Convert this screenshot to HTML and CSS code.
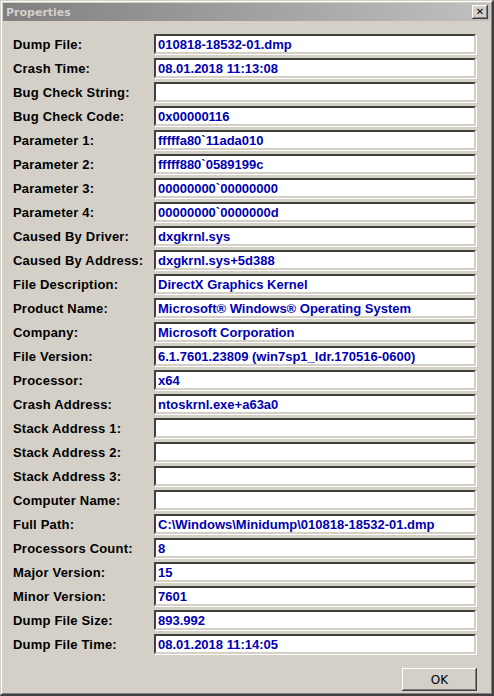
FILE: index.html
```html
<!DOCTYPE html>
<html>
<head>
    <meta charset="UTF-8">
    <title>Properties</title>
    <link rel="stylesheet" href="styles.css">
</head>
<body>
    <div class="window">
        <div class="title-bar">
            <span class="title">Properties</span>
            <button class="close-button">&#x2715;</button>
        </div>

        <div class="props">
            <div class="row"><span class="label">Dump File:</span><div class="field">010818-18532-01.dmp</div></div>
            <div class="row"><span class="label">Crash Time:</span><div class="field">08.01.2018 11:13:08</div></div>
            <div class="row"><span class="label">Bug Check String:</span><div class="field"></div></div>
            <div class="row"><span class="label">Bug Check Code:</span><div class="field">0x00000116</div></div>
            <div class="row"><span class="label">Parameter 1:</span><div class="field">fffffa80`11ada010</div></div>
            <div class="row"><span class="label">Parameter 2:</span><div class="field">fffff880`0589199c</div></div>
            <div class="row"><span class="label">Parameter 3:</span><div class="field">00000000`00000000</div></div>
            <div class="row"><span class="label">Parameter 4:</span><div class="field">00000000`0000000d</div></div>
            <div class="row"><span class="label">Caused By Driver:</span><div class="field">dxgkrnl.sys</div></div>
            <div class="row"><span class="label">Caused By Address:</span><div class="field">dxgkrnl.sys+5d388</div></div>
            <div class="row"><span class="label">File Description:</span><div class="field">DirectX Graphics Kernel</div></div>
            <div class="row"><span class="label">Product Name:</span><div class="field">Microsoft® Windows® Operating System</div></div>
            <div class="row"><span class="label">Company:</span><div class="field">Microsoft Corporation</div></div>
            <div class="row"><span class="label">File Version:</span><div class="field">6.1.7601.23809 (win7sp1_ldr.170516-0600)</div></div>
            <div class="row"><span class="label">Processor:</span><div class="field">x64</div></div>
            <div class="row"><span class="label">Crash Address:</span><div class="field">ntoskrnl.exe+a63a0</div></div>
            <div class="row"><span class="label">Stack Address 1:</span><div class="field"></div></div>
            <div class="row"><span class="label">Stack Address 2:</span><div class="field"></div></div>
            <div class="row"><span class="label">Stack Address 3:</span><div class="field"></div></div>
            <div class="row"><span class="label">Computer Name:</span><div class="field"></div></div>
            <div class="row"><span class="label">Full Path:</span><div class="field">C:\Windows\Minidump\010818-18532-01.dmp</div></div>
            <div class="row"><span class="label">Processors Count:</span><div class="field">8</div></div>
            <div class="row"><span class="label">Major Version:</span><div class="field">15</div></div>
            <div class="row"><span class="label">Minor Version:</span><div class="field">7601</div></div>
            <div class="row"><span class="label">Dump File Size:</span><div class="field">893.992</div></div>
            <div class="row"><span class="label">Dump File Time:</span><div class="field">08.01.2018 11:14:05</div></div>
        </div>

        <div class="buttons">
            <button class="ok-button">OK</button>
        </div>
    </div>
</body>
</html>
```

FILE: styles.css
```css
html, body {
    margin: 0;
    padding: 0;
    background-color: #d4d0c8;
}
.window {
    width: 494px;
    height: 696px;
    box-sizing: border-box;
    background-color: #d4d0c8;
    border-top: 1px solid #d4d0c8;
    border-left: 1px solid #d4d0c8;
    border-right: 2px solid #404040;
    border-bottom: 2px solid #404040;
    box-shadow: inset 1px 1px 0 #ffffff, inset -1px -1px 0 #808080;
    padding: 2px;
    display: flex;
    flex-direction: column;
    font-family: "Liberation Sans", Arial, sans-serif;
}
.title-bar {
    height: 18px;
    display: flex;
    align-items: center;
    justify-content: space-between;
    padding: 0 2px 0 3px;
    background: linear-gradient(to right, #808080, #c0c0c0);
}
.title {
    font-family: "DejaVu Sans", Verdana, sans-serif;
    font-size: 11px;
    font-weight: bold;
    color: #d4d0c8;
}
.close-button {
    width: 16px;
    height: 14px;
    padding: 0;
    font-family: "DejaVu Sans", sans-serif;
    font-size: 10px;
    font-weight: bold;
    line-height: 12px;
    color: #000000;
    background-color: #d4d0c8;
    border: none;
    box-shadow: inset -1px -1px 0 #404040, inset 1px 1px 0 #ffffff, inset -2px -2px 0 #808080;
}
.props {
    display: flex;
    flex-direction: column;
    gap: 4px;
    padding: 13px 14px 0 10px;
}
.row {
    display: flex;
    align-items: center;
    height: 20px;
}
.label {
    width: 141px;
    font-size: 13px;
    font-weight: bold;
    letter-spacing: 0.2px;
    color: #000000;
}
.field {
    flex: 1;
    height: 20px;
    box-sizing: border-box;
    padding: 1px 2px;
    background-color: #ffffff;
    border-top: 2px solid #404040;
    border-left: 2px solid #404040;
    border-bottom: 2px solid #d4d0c8;
    border-right: 2px solid #d4d0c8;
    box-shadow: 1px 1px 0 #ffffff;
    font-size: 13px;
    font-weight: bold;
    line-height: 16px;
    color: #0000b4;
    white-space: nowrap;
    overflow: hidden;
}
.buttons {
    display: flex;
    justify-content: flex-end;
    padding: 14px 13px 0 0;
}
.ok-button {
    width: 75px;
    height: 23px;
    padding: 0;
    font-family: "DejaVu Sans", Verdana, sans-serif;
    font-size: 12px;
    color: #000000;
    background-color: #d4d0c8;
    border: none;
    box-shadow: inset -1px -1px 0 #404040, inset 1px 1px 0 #ffffff, inset -2px -2px 0 #808080;
}
```
